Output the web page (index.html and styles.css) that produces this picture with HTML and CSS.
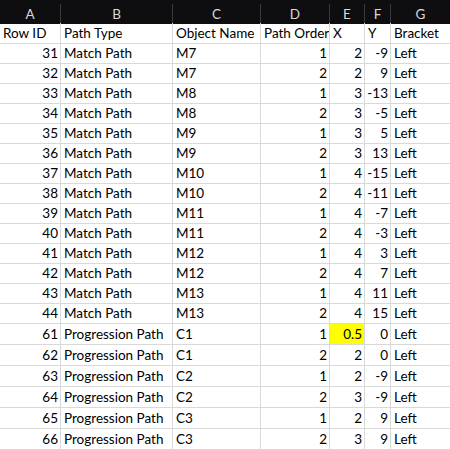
FILE: index.html
```html
<!DOCTYPE html>
<html>
<head>
<meta charset="utf-8">
<link rel="stylesheet" href="styles.css">
</head>
<body>
<div class="sheet">
  <div class="colheads">
    <div class="ch">A</div><div class="ch">B</div><div class="ch">C</div><div class="ch">D</div><div class="ch">E</div><div class="ch">F</div><div class="ch">G</div>
  </div>
  <div class="grid">
    <div class="c">Row ID</div><div class="c">Path Type</div><div class="c">Object Name</div><div class="c">Path Order</div><div class="c">X</div><div class="c">Y</div><div class="c">Bracket</div>

    <div class="c n">31</div><div class="c">Match Path</div><div class="c">M7</div><div class="c n">1</div><div class="c n">2</div><div class="c n">-9</div><div class="c">Left</div>
    <div class="c n">32</div><div class="c">Match Path</div><div class="c">M7</div><div class="c n">2</div><div class="c n">2</div><div class="c n">9</div><div class="c">Left</div>
    <div class="c n">33</div><div class="c">Match Path</div><div class="c">M8</div><div class="c n">1</div><div class="c n">3</div><div class="c n">-13</div><div class="c">Left</div>
    <div class="c n">34</div><div class="c">Match Path</div><div class="c">M8</div><div class="c n">2</div><div class="c n">3</div><div class="c n">-5</div><div class="c">Left</div>
    <div class="c n">35</div><div class="c">Match Path</div><div class="c">M9</div><div class="c n">1</div><div class="c n">3</div><div class="c n">5</div><div class="c">Left</div>
    <div class="c n">36</div><div class="c">Match Path</div><div class="c">M9</div><div class="c n">2</div><div class="c n">3</div><div class="c n">13</div><div class="c">Left</div>
    <div class="c n">37</div><div class="c">Match Path</div><div class="c">M10</div><div class="c n">1</div><div class="c n">4</div><div class="c n">-15</div><div class="c">Left</div>
    <div class="c n">38</div><div class="c">Match Path</div><div class="c">M10</div><div class="c n">2</div><div class="c n">4</div><div class="c n">-11</div><div class="c">Left</div>
    <div class="c n">39</div><div class="c">Match Path</div><div class="c">M11</div><div class="c n">1</div><div class="c n">4</div><div class="c n">-7</div><div class="c">Left</div>
    <div class="c n">40</div><div class="c">Match Path</div><div class="c">M11</div><div class="c n">2</div><div class="c n">4</div><div class="c n">-3</div><div class="c">Left</div>
    <div class="c n">41</div><div class="c">Match Path</div><div class="c">M12</div><div class="c n">1</div><div class="c n">4</div><div class="c n">3</div><div class="c">Left</div>
    <div class="c n">42</div><div class="c">Match Path</div><div class="c">M12</div><div class="c n">2</div><div class="c n">4</div><div class="c n">7</div><div class="c">Left</div>
    <div class="c n">43</div><div class="c">Match Path</div><div class="c">M13</div><div class="c n">1</div><div class="c n">4</div><div class="c n">11</div><div class="c">Left</div>
    <div class="c n">44</div><div class="c">Match Path</div><div class="c">M13</div><div class="c n">2</div><div class="c n">4</div><div class="c n">15</div><div class="c">Left</div>

    <div class="c n">61</div><div class="c">Progression Path</div><div class="c">C1</div><div class="c n">1</div><div class="c n hl">0.5</div><div class="c n">0</div><div class="c">Left</div>
    <div class="c n">62</div><div class="c">Progression Path</div><div class="c">C1</div><div class="c n">2</div><div class="c n">2</div><div class="c n">0</div><div class="c">Left</div>
    <div class="c n">63</div><div class="c">Progression Path</div><div class="c">C2</div><div class="c n">1</div><div class="c n">2</div><div class="c n">-9</div><div class="c">Left</div>
    <div class="c n">64</div><div class="c">Progression Path</div><div class="c">C2</div><div class="c n">2</div><div class="c n">3</div><div class="c n">-9</div><div class="c">Left</div>
    <div class="c n">65</div><div class="c">Progression Path</div><div class="c">C3</div><div class="c n">1</div><div class="c n">2</div><div class="c n">9</div><div class="c">Left</div>
    <div class="c n">66</div><div class="c">Progression Path</div><div class="c">C3</div><div class="c n">2</div><div class="c n">3</div><div class="c n">9</div><div class="c">Left</div>
  </div>
</div>
</body>
</html>
```

FILE: styles.css
```css
html, body {
  margin: 0;
  padding: 0;
  background: #ffffff;
}

.sheet {
  width: 450px;
  height: 450px;
  overflow: hidden;
  font-family: "Lato", "Open Sans", sans-serif;
  font-size: 13.5px;
  color: #000000;
}

.colheads {
  display: grid;
  grid-template-columns: 60px 111px 87px 68px 34px 25px 1fr;
  column-gap: 1px;
  background: #3a3a3c;
  border-top: 4px solid #0e0e10;
  height: 19px;
}

.ch {
  background: #0e0e10;
  color: #d8d8d8;
  text-align: center;
  line-height: 20px;
  font-size: 13.5px;
}

.grid {
  display: grid;
  grid-template-columns: 60px 111px 87px 68px 34px 25px 1fr;
  grid-template-rows: repeat(15, 19px) repeat(6, 20px);
  gap: 1px;
  padding: 1px 0;
  background: #d9d9d9;
}

.c {
  background: #ffffff;
  padding: 0 2px 0 3px;
  line-height: 19px;
  white-space: nowrap;
  overflow: hidden;
  display: flex;
  align-items: flex-end;
}

.n {
  justify-content: flex-end;
}

.hl {
  background: #ffff00;
}
```
